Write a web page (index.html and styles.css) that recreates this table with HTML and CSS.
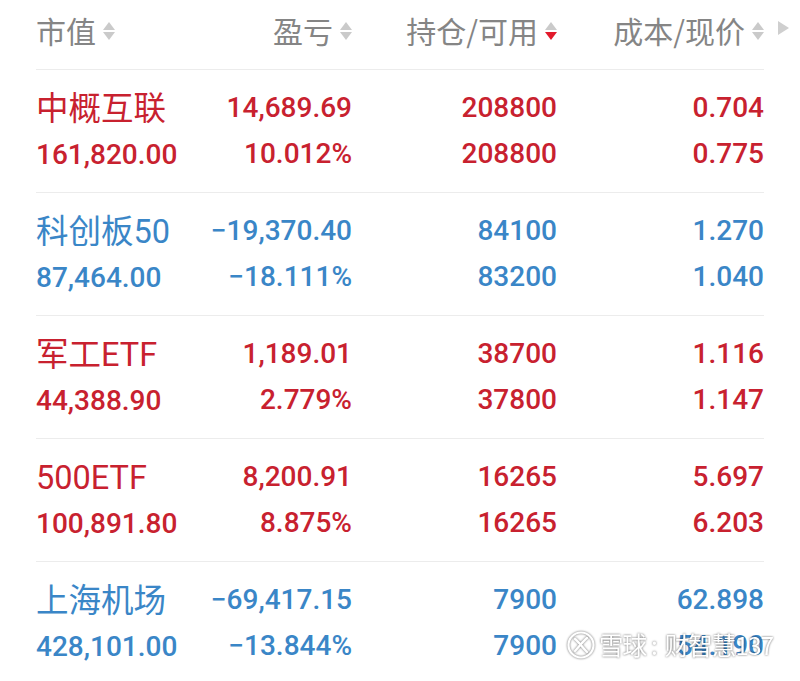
FILE: index.html
```html
<!DOCTYPE html>
<html lang="zh-CN">
<head>
<meta charset="utf-8">
<title>持仓</title>
<link rel="stylesheet" href="styles.css">
</head>
<body>
<div class="page">
  <div class="head">
    <div class="hcell left">市值<span class="sort"><i class="up"></i><i class="down"></i></span></div>
    <div class="hcell">盈亏<span class="sort"><i class="up"></i><i class="down"></i></span></div>
    <div class="hcell">持仓/可用<span class="sort"><i class="up"></i><i class="down active"></i></span></div>
    <div class="hcell">成本/现价<span class="sort"><i class="up"></i><i class="down"></i></span></div>
    <span class="more"></span>
  </div>

  <div class="row red">
    <div class="cell left"><div class="name">中概互联</div><div class="num">161,820.00</div></div>
    <div class="cell"><div class="num">14,689.69</div><div class="num">10.012%</div></div>
    <div class="cell"><div class="num">208800</div><div class="num">208800</div></div>
    <div class="cell"><div class="num">0.704</div><div class="num">0.775</div></div>
  </div>

  <div class="row blue">
    <div class="cell left"><div class="name">科创板50</div><div class="num">87,464.00</div></div>
    <div class="cell"><div class="num">−19,370.40</div><div class="num">−18.111%</div></div>
    <div class="cell"><div class="num">84100</div><div class="num">83200</div></div>
    <div class="cell"><div class="num">1.270</div><div class="num">1.040</div></div>
  </div>

  <div class="row red">
    <div class="cell left"><div class="name">军工ETF</div><div class="num">44,388.90</div></div>
    <div class="cell"><div class="num">1,189.01</div><div class="num">2.779%</div></div>
    <div class="cell"><div class="num">38700</div><div class="num">37800</div></div>
    <div class="cell"><div class="num">1.116</div><div class="num">1.147</div></div>
  </div>

  <div class="row red">
    <div class="cell left"><div class="name">500ETF</div><div class="num">100,891.80</div></div>
    <div class="cell"><div class="num">8,200.91</div><div class="num">8.875%</div></div>
    <div class="cell"><div class="num">16265</div><div class="num">16265</div></div>
    <div class="cell"><div class="num">5.697</div><div class="num">6.203</div></div>
  </div>

  <div class="row blue">
    <div class="cell left"><div class="name">上海机场</div><div class="num">428,101.00</div></div>
    <div class="cell"><div class="num">−69,417.15</div><div class="num">−13.844%</div></div>
    <div class="cell"><div class="num">7900</div><div class="num">7900</div></div>
    <div class="cell"><div class="num">62.898</div><div class="num">54.190</div></div>
  </div>

  <div class="watermark">
    <svg class="logo" width="28" height="28" viewBox="0 0 28 28">
      <circle cx="14" cy="14" r="12.5" fill="none" stroke="#fff" stroke-width="2.2"/>
      <path d="M8 8 C12 11 15 16 20 21" fill="none" stroke="#fff" stroke-width="2.4" stroke-linecap="round"/>
      <path d="M20 7 C16 10 12 16 8 20" fill="none" stroke="#fff" stroke-width="2.4" stroke-linecap="round"/>
    </svg>
    <span class="wm-text">雪球<span class="colon">:</span>财智慧137</span>
  </div>
</div>
</body>
</html>
```

FILE: styles.css
```css
* { box-sizing: border-box; }
html, body { margin: 0; padding: 0; background: #fff; }
.page {
  position: relative;
  width: 800px;
  height: 681px;
  overflow: hidden;
  padding: 0 36px;
  font-family: Roboto, "Noto Sans CJK SC", sans-serif;
}
.head, .row {
  display: grid;
  grid-template-columns: 150px 166px 205px 207px;
  border-bottom: 1px solid #ececec;
}
.head {
  position: relative;
  padding: 7px 0 16px;
  height: 70px;
}
.hcell {
  display: flex;
  align-items: center;
  justify-content: flex-end;
  height: 46px;
  font-size: 30px;
  color: #858585;
  font-family: "Noto Sans CJK SC", sans-serif;
}
.hcell.left { justify-content: flex-start; }
.sort {
  display: flex;
  flex-direction: column;
  gap: 2px;
  margin-left: 7px;
  margin-top: 2px;
}
.sort i {
  display: block;
  width: 0;
  height: 0;
  border-left: 6px solid transparent;
  border-right: 6px solid transparent;
}
.sort .up { border-bottom: 8px solid #cacaca; }
.sort .down { border-top: 8px solid #cacaca; }
.sort .down.active { border-top-color: #e21a2c; }
.more {
  position: absolute;
  right: -25px;
  top: 21px;
  width: 0;
  height: 0;
  border-top: 7px solid transparent;
  border-bottom: 7px solid transparent;
  border-left: 11px solid #cfcfcf;
}
.row {
  padding: 15px 0;
  height: 123px;
}
.cell {
  display: flex;
  flex-direction: column;
  align-items: flex-end;
}
.cell.left { align-items: flex-start; }
.name {
  font-size: 32.5px;
  line-height: 46px;
  height: 46px;
  white-space: nowrap;
  margin-top: 1px;
}
.num {
  font-size: 28px;
  font-weight: 500;
  line-height: 46px;
  height: 46px;
  white-space: nowrap;
}
.red { color: #c8212f; }
.blue { color: #3a86c7; }
.watermark {
  position: absolute;
  left: 567px;
  top: 628px;
  display: flex;
  align-items: center;
  gap: 4px;
  filter: drop-shadow(0 0 1px rgba(0,0,0,0.6));
}
.logo { display: block; }
.wm-text {
  font-family: "Noto Sans CJK SC", sans-serif;
  font-size: 24.5px;
  line-height: 34px;
  color: #fff;
  letter-spacing: -1px;
  white-space: nowrap;
}
.colon { margin: 0 8px 0 5px; }
```
